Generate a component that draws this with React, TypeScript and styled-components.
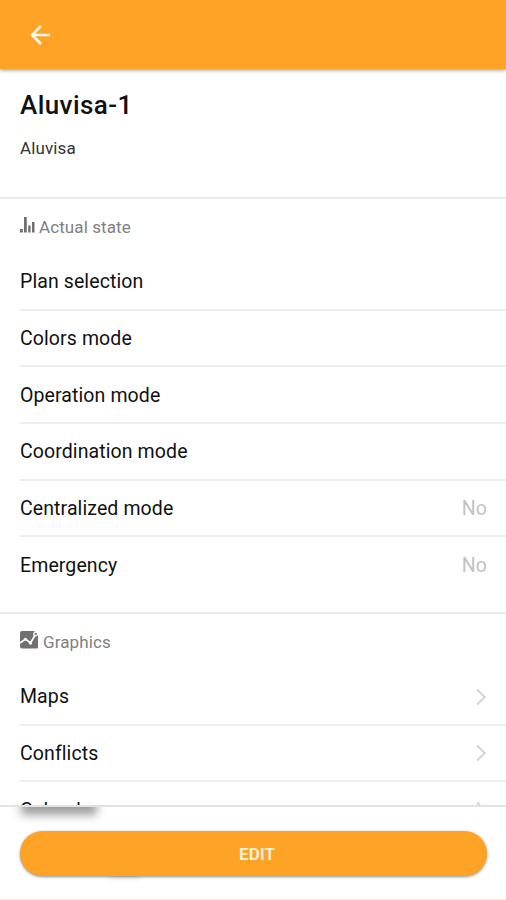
import React from 'react';
import styled, { createGlobalStyle } from 'styled-components';

const GlobalStyle = createGlobalStyle`
  * { box-sizing: border-box; }
  body { margin: 0; background: #fff; font-family: Roboto, "Liberation Sans", sans-serif; }
`;

const Screen = styled.div`
  display: flex;
  flex-direction: column;
  height: 900px;
  overflow: hidden;
  background: #fff;
  color: #111;
`;

const AppBar = styled.header`
  flex: none;
  display: flex;
  align-items: center;
  height: 69px;
  padding-left: 30px;
  background: #ffa326;
  box-shadow: 0 1px 4px rgba(0, 0, 0, 0.45);
  z-index: 1;
`;

const BackButton = styled.button`
  display: flex;
  padding: 1px 0 0;
  border: 0;
  background: none;
`;

const Content = styled.main`
  flex: 1;
  min-height: 0;
  overflow: hidden;
`;

const Heading = styled.section`
  height: 128px;
  padding: 19px 20px 0;
`;

const Title = styled.h1`
  margin: 0;
  font-size: 26px;
  line-height: 34px;
  font-weight: 500;
  letter-spacing: 0.42px;
`;

const Subtitle = styled.p`
  margin: 14px 0 0;
  font-size: 17px;
  line-height: 24px;
  letter-spacing: 0.12px;
  color: #333;
`;

const Section = styled.section<{ $height?: number }>`
  height: ${(p) => (p.$height ? `${p.$height}px` : 'auto')};
  border-top: 2px solid #ebebeb;
`;

const SectionTitle = styled.h2<{ $gap: number }>`
  display: flex;
  align-items: center;
  gap: ${(p) => p.$gap}px;
  height: 55px;
  margin: 0;
  padding-left: 20px;
  font-size: 17px;
  font-weight: 400;
  letter-spacing: 0.1px;
  color: #808080;
`;

const SectionIcon = styled.svg`
  flex: none;
  color: #707070;
  margin-top: -3px;
`;

const Row = styled.div`
  display: flex;
  align-items: center;
  justify-content: space-between;
  height: 56.65px;
  margin-left: 20px;
  padding: 1px 19px 0 0;
  font-size: 19.5px;
  letter-spacing: 0.1px;
  border-bottom: 2px solid #eeeeee;
  &:last-child { border-bottom-color: transparent; }
`;

const Value = styled.span`
  color: #c2c2c2;
`;

const Footer = styled.footer`
  position: relative;
  flex: none;
  height: 95px;
  padding: 25px 19px 0 20px;
  border-top: 2px solid #e2e2e2;
  background: #fff;
  overflow: hidden;
`;

const Haze = styled.div`
  position: absolute;
  top: -12px;
  left: 21px;
  width: 76px;
  height: 20px;
  background: rgba(0, 0, 0, 0.38);
  filter: blur(5px);
`;

const LowerHaze = styled(Haze)`
  top: 65px;
  left: 110px;
  width: 30px;
  height: 5px;
  background: rgba(0, 0, 0, 0.15);
  filter: blur(3px);
`;

const EditButton = styled.button`
  position: relative;
  display: block;
  width: 100%;
  height: 45px;
  margin-top: -1px;
  padding: 0 0 0 7px;
  border: 0;
  border-radius: 23px;
  background: #ffa326;
  color: #fff3df;
  font: 600 17px Roboto, "Liberation Sans", sans-serif;
  box-shadow: 0 1px 3px rgba(0, 0, 0, 0.45);
`;

const BottomEdge = styled.div`
  flex: none;
  height: 2px;
  background: #fdf1e9;
  margin-top: -2px;
  z-index: 1;
`;

const Chevron = () => (
  <svg width="12" height="18" viewBox="0 0 12 18" fill="none" stroke="#d2d2d2" strokeWidth="2">
    <path d="M2 1.5 9.7 9 2 16.5" />
  </svg>
);

const states: { label: string; value?: string }[] = [
  { label: 'Plan selection' },
  { label: 'Colors mode' },
  { label: 'Operation mode' },
  { label: 'Coordination mode' },
  { label: 'Centralized mode', value: 'No' },
  { label: 'Emergency', value: 'No' },
];

const graphics = ['Maps', 'Conflicts', 'Calendar'];

export default function App() {
  return (
    <Screen>
      <GlobalStyle />
      <AppBar>
        <BackButton aria-label="Back">
          <svg width="21" height="20" viewBox="0 0 21 20" fill="none" stroke="#fff8ea" strokeWidth="2.6">
            <path d="M20 10H2M11 1 2 10l9 9" />
          </svg>
        </BackButton>
      </AppBar>
      <Content>
        <Heading>
          <Title>Aluvisa-1</Title>
          <Subtitle>Aluvisa</Subtitle>
        </Heading>
        <Section $height={415}>
          <SectionTitle $gap={4}>
            <SectionIcon width="15" height="16" viewBox="0 0 15 16" fill="currentColor">
              <path d="M0 12h2.8v3.5H0zM4 0h2.8v15.500H4zM8.200 8.500h2.400v7H8.200zM12 5h2.500v10.500H12z" />
            </SectionIcon>
            Actual state
          </SectionTitle>
          {states.map((s) => (
            <Row key={s.label}>
              {s.label}
              {s.value && <Value>{s.value}</Value>}
            </Row>
          ))}
        </Section>
        <Section>
          <SectionTitle $gap={4}>
            <SectionIcon width="19" height="18" viewBox="0 0 19 18">
              <path d="M2 0h12l4 4v12a1.500 1.500 0 0 1-1.500 1.500H2a2 2 0 0 1-2-2V2a2 2 0 0 1 2-2z" fill="currentColor" />
              <path d="M0 12 5.500 8l5 4L15.500 3.500" fill="none" stroke="#fff" strokeWidth="1.7" />
              <circle cx="5.500" cy="8.300" r="1.500" fill="#fff" />
              <circle cx="10.500" cy="12" r="1.700" fill="#fff" />
              <circle cx="15.500" cy="3.200" r="2.400" fill="#fff" />
              <circle cx="15.800" cy="3" r="1.300" fill="#858585" />
            </SectionIcon>
            Graphics
          </SectionTitle>
          {graphics.map((label) => (
            <Row key={label}>
              {label}
              <Chevron />
            </Row>
          ))}
        </Section>
      </Content>
      <Footer>
        <Haze />
        <LowerHaze />
        <EditButton>EDIT</EditButton>
      </Footer>
      <BottomEdge />
    </Screen>
  );
}
